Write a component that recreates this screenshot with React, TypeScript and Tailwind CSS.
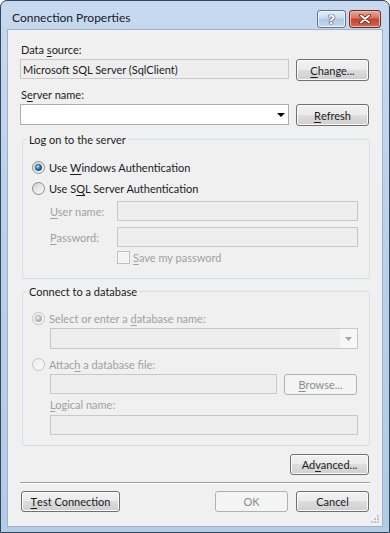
import React from 'react';

function U({ children }: { children: React.ReactNode }) {
  return <span className="underline decoration-1 underline-offset-[2px]">{children}</span>;
}

function Btn({ children, w, h = 'h-[21px]', disabled }: { children: React.ReactNode; w: string; h?: string; disabled?: boolean }) {
  const look = disabled
    ? 'border-[#adb2b5] bg-[#f4f4f4] text-[#8b8b8b]'
    : 'border-[#707070] bg-[linear-gradient(#f2f2f2_0%,#ebebeb_50%,#dddddd_50%,#cfcfcf_100%)] shadow-[inset_0_0_0_1px_#fbfbfb] text-[#1c1c1c]';
  return (
    <div className={`${w} ${h} shrink-0 rounded-[3px] border flex items-center justify-center leading-[15px] ${look}`}>
      {children}
    </div>
  );
}

function Radio({ checked, disabled }: { checked?: boolean; disabled?: boolean }) {
  return (
    <svg width="13" height="13" viewBox="0 0 13 13" className="shrink-0">
      <defs>
        <linearGradient id="rOn" x1="0" y1="0" x2="1" y2="1">
          <stop offset="0" stopColor="#d2d2d2" />
          <stop offset="1" stopColor="#fdfdfd" />
        </linearGradient>
        <linearGradient id="rOff" x1="0" y1="0" x2="1" y2="1">
          <stop offset="0" stopColor="#ececec" />
          <stop offset="1" stopColor="#fbfbfb" />
        </linearGradient>
        <radialGradient id="dotOn" cx="0.38" cy="0.35" r="0.7">
          <stop offset="0" stopColor="#bfe6ff" />
          <stop offset="0.45" stopColor="#3a8bc8" />
          <stop offset="1" stopColor="#0f3e6a" />
        </radialGradient>
        <radialGradient id="dotOff" cx="0.38" cy="0.35" r="0.7">
          <stop offset="0" stopColor="#f2f2f2" />
          <stop offset="1" stopColor="#9a9a9a" />
        </radialGradient>
      </defs>
      <circle cx="6.5" cy="6.5" r="6" fill={disabled ? 'url(#rOff)' : 'url(#rOn)'} stroke={disabled ? '#c3c3c3' : '#8b8b8b'} />
      {checked && <circle cx="6.5" cy="6.5" r="3.2" fill={disabled ? 'url(#dotOff)' : 'url(#dotOn)'} stroke={disabled ? '#a8a8a8' : '#1b4469'} strokeWidth="0.6" />}
    </svg>
  );
}

function Box({ w, h = 'h-[20px]', children, white }: { w: string; h?: string; children?: React.ReactNode; white?: boolean }) {
  return (
    <div className={`${w} ${h} shrink-0 border flex items-center pl-[2px] leading-[15px] ${white ? 'bg-white border-[#abadb3]' : 'bg-[#eeeeee] border-[#c8c8c8]'}`}>
      {children}
    </div>
  );
}

export default function App() {
  return (
    <div className="w-[390px] h-[533px] flex flex-col border border-[#34465b] rounded-t-[7px] bg-[linear-gradient(#c7d9ee,#bcd1ea_40%,#b3cbe7)] text-[11px] font-['Lato','Segoe_UI',sans-serif] text-[#1c1c1c] select-none">
      {/* title bar */}
      <div className="h-[28px] shrink-0 flex items-start pl-[11px] pr-[8px]">
        <span className="pt-[9px] text-[12px] leading-[16px] text-[#15202c]">Connection Properties</span>
        <div className="ml-auto mt-[9px] flex gap-[3px]">
          <div className="w-[29px] h-[18px] rounded-[3px] border border-[#5e7593] bg-[linear-gradient(#e4edf7,#cbdbee_45%,#b0c7e3_50%,#c6d8ee)] shadow-[inset_0_0_0_1px_#eef4fb] flex items-center justify-center">
            <span className="text-[13px] font-bold leading-none text-white font-['DejaVu_Sans',sans-serif] [text-shadow:0_0_1px_#22364e,0_0_1px_#22364e,0_0_1px_#22364e]">?</span>
          </div>
          <div className="w-[32px] h-[18px] rounded-[3px] border border-[#6b2a22] bg-[linear-gradient(#e9a999,#d8705c_45%,#c5412f_50%,#d26a52)] shadow-[inset_0_0_0_1px_#f0b8a8] flex items-center justify-center">
            <svg width="12" height="10" viewBox="0 0 12 10">
              <path d="M2 1.5 L10 8.5 M10 1.5 L2 8.5" stroke="#5a1c15" strokeWidth="3.6" strokeLinecap="round" />
              <path d="M2 1.5 L10 8.5 M10 1.5 L2 8.5" stroke="#ffffff" strokeWidth="2" strokeLinecap="round" />
            </svg>
          </div>
        </div>
      </div>

      {/* client area */}
      <div className="relative flex-1 mx-[6px] mb-[5px] bg-[#f0f0f0] border border-[#9cb2cd] flex flex-col pl-[12px] pr-[13px]">
        <div className="mt-[12px] ml-[1px] h-[15px] leading-[15px]">Data <U>s</U>ource:</div>
        <div className="mt-[2px] flex items-start">
          <Box w="w-[269px]"><span>Microsoft SQL Server (SqlClient)</span></Box>
          <div className="ml-[7px]"><Btn w="w-[73px]" h="h-[22px]"><U>C</U>hange...</Btn></div>
        </div>

        <div className="mt-[6px] ml-[1px] h-[15px] leading-[15px]">S<U>e</U>rver name:</div>
        <div className="mt-[2px] flex items-start">
          <Box w="w-[269px]" h="h-[21px]" white>
            <svg width="8" height="4" viewBox="0 0 8 4" className="ml-auto mr-[3px]">
              <path d="M0 0 H8 L4 4 Z" fill="#000" />
            </svg>
          </Box>
          <div className="ml-[7px]"><Btn w="w-[73px]" h="h-[22px]"><U>R</U>efresh</Btn></div>
        </div>

        <fieldset className="mt-[6px] ml-[2px] w-[348px] border border-[#d5dfe5] rounded-[3px]">
          <legend className="ml-[4px] px-[2px] h-[15px] leading-[15px]">Log on to the server</legend>
          <div className="pl-[9px] pb-[13px] flex flex-col">
            <div className="mt-[10px] h-[20px] flex items-center gap-[4px]">
              <Radio checked />
              <span className="leading-[15px]">Use <U>W</U>indows Authentication</span>
            </div>
            <div className="mt-[1px] h-[20px] flex items-center gap-[4px]">
              <Radio />
              <span className="leading-[15px]">Use S<U>Q</U>L Server Authentication</span>
            </div>
            <div className="mt-[3px] flex items-center text-[#a0a0a0]">
              <span className="ml-[18px] w-[67px] leading-[15px]"><U>U</U>ser name:</span>
              <Box w="w-[241px]" />
            </div>
            <div className="mt-[6px] flex items-center text-[#a0a0a0]">
              <span className="ml-[18px] w-[67px] leading-[15px]"><U>P</U>assword:</span>
              <Box w="w-[241px]" />
            </div>
            <div className="mt-[3px] h-[15px] flex items-center text-[#a0a0a0]">
              <div className="ml-[85px] w-[13px] h-[13px] border border-[#bdbdbd] bg-[#f3f3f3] shadow-[inset_0_0_0_1px_#fafafa]" />
              <span className="ml-[3px] leading-[15px]"><U>S</U>ave my password</span>
            </div>
          </div>
        </fieldset>

        <fieldset className="mt-[5px] ml-[2px] w-[348px] border border-[#d5dfe5] rounded-[3px]">
          <legend className="ml-[4px] px-[2px] h-[15px] leading-[15px]">Connect to a database</legend>
          <div className="pl-[9px] pb-[10px] flex flex-col text-[#a0a0a0]">
            <div className="mt-[9px] h-[20px] flex items-center gap-[4px]">
              <Radio checked disabled />
              <span className="leading-[15px]">Select or enter a <U>d</U>atabase name:</span>
            </div>
            <div className="ml-[18px] flex">
              <div className="w-[308px] h-[21px] border border-[#c8c8c8] bg-[#eeeeee] flex justify-end">
                <div className="w-[17px] h-full bg-[#f7f7f7] flex items-center justify-center">
                  <svg width="7" height="4" viewBox="0 0 7 4"><path d="M0 0 H7 L3.5 4 Z" fill="#a6a6a6" /></svg>
                </div>
              </div>
            </div>
            <div className="mt-[5px] h-[20px] flex items-center gap-[4px]">
              <Radio disabled />
              <span className="leading-[15px]">Attac<U>h</U> a database file:</span>
            </div>
            <div className="ml-[18px] flex items-start">
              <Box w="w-[227px]" />
              <div className="ml-[7px]"><Btn w="w-[73px]" disabled><U>B</U>rowse...</Btn></div>
            </div>
            <div className="mt-[2px] ml-[18px] h-[15px] leading-[15px]"><U>L</U>ogical name:</div>
            <div className="mt-[3px] ml-[18px]">
              <Box w="w-[308px]" />
            </div>
          </div>
        </fieldset>

        <div className="mt-[8px] self-end">
          <Btn w="w-[79px]">Ad<U>v</U>anced...</Btn>
        </div>
        <div className="mt-[7px] w-[350px] h-[2px] border-t border-t-[#a0a0a0] border-b border-b-white" />
        <div className="mt-[7px] flex items-start">
          <div className="ml-[1px]"><Btn w="w-[99px]"><U>T</U>est Connection</Btn></div>
          <div className="ml-auto"><Btn w="w-[73px]" disabled>OK</Btn></div>
          <div className="ml-[8px]"><Btn w="w-[73px]">Cancel</Btn></div>
        </div>

        {/* size grip */}
        <svg width="9" height="9" viewBox="0 0 9 9" className="absolute right-[2px] bottom-[2px]">
          <rect x="6" y="0" width="2" height="2" fill="#c4c4c4" />
          <rect x="3" y="3" width="2" height="2" fill="#c4c4c4" />
          <rect x="6" y="3" width="2" height="2" fill="#c4c4c4" />
          <rect x="0" y="6" width="2" height="2" fill="#c4c4c4" />
          <rect x="3" y="6" width="2" height="2" fill="#c4c4c4" />
          <rect x="6" y="6" width="2" height="2" fill="#c4c4c4" />
        </svg>
      </div>
    </div>
  );
}
